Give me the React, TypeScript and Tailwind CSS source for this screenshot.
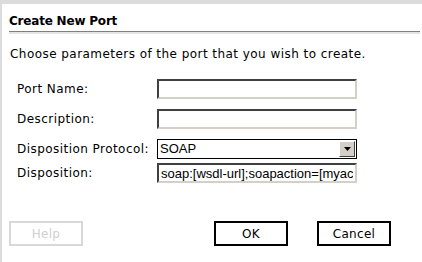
import { ChangeEvent, useState } from "react";

export default function App() {
  const [name, setName] = useState("");
  const [desc, setDesc] = useState("");
  const [disp, setDisp] = useState("soap:[wsdl-url];soapaction=[myaction]");

  const field =
    "w-[200px] h-5 px-[2px] bg-white border-[2px] border-t-[#404040] border-l-[#404040] border-b-[#d4d0c8] border-r-[#d4d0c8] font-['Liberation_Sans',Arial,sans-serif] text-[13px] text-black outline-none";

  return (
    <div className="w-[422px] h-[262px] bg-white border-l-2 border-t-4 border-[#dcdcdc] font-['DejaVu_Sans',Verdana,sans-serif] text-black overflow-hidden">
      {/* Title */}
      <div className="pl-[7px] pr-[2px]">
        <h1 className="pt-[8px] h-[27px] text-[12px] font-bold tracking-[-0.2px]">Create New Port</h1>
        <div className="border-t border-[#808080] border-b-2 border-b-[#e4e4e4]" />
      </div>

      {/* Body */}
      <div className="pl-[8px] pt-[11px] text-[12px] tracking-[0.45px]">
        <p>Choose parameters of the port that you wish to create.</p>

        <div className="mt-[16px] pl-[7px] grid grid-cols-[140px_200px] gap-y-[10px] items-center">
          <label>Port Name:</label>
          <input
            className={field}
            value={name}
            onChange={(e: ChangeEvent<HTMLInputElement>) => setName(e.target.value)}
          />
          <label>Description:</label>
          <input
            className={field}
            value={desc}
            onChange={(e: ChangeEvent<HTMLInputElement>) => setDesc(e.target.value)}
          />
          <label>Disposition Protocol:</label>
          <div className="flex items-center w-[200px] h-5 border border-black bg-white">
            <span className="flex-1 pl-[2px] font-['Liberation_Sans',Arial,sans-serif] text-[13px] tracking-normal">SOAP</span>
            <span className="w-4 h-4 mr-px flex items-center justify-center bg-[#d4d0c8] border border-t-white border-l-white border-b-[#404040] border-r-[#404040]">
              <svg width="7" height="4" viewBox="0 0 7 4">
                <path d="M0 0h7L3.5 4z" fill="#000" />
              </svg>
            </span>
          </div>
          <label className="-mt-[6px]">Disposition:</label>
          <input
            className={field + " -mt-[6px] tracking-normal overflow-hidden"}
            value={disp}
            onChange={(e: ChangeEvent<HTMLInputElement>) => setDisp(e.target.value)}
          />
        </div>
      </div>

      {/* Buttons */}
      <div className="mt-[38px] flex pl-[7px] tracking-[0.3px]">
        <button disabled className="w-[74px] h-[25px] border-2 border-[#d8d8d8] text-[#d0d0d0] text-[12px]">
          Help
        </button>
        <button className="ml-[131px] w-[74px] h-[25px] border-2 border-black text-[12px]">OK</button>
        <button className="ml-[29px] w-[74px] h-[25px] border-2 border-black text-[12px]">Cancel</button>
      </div>
    </div>
  );
}
